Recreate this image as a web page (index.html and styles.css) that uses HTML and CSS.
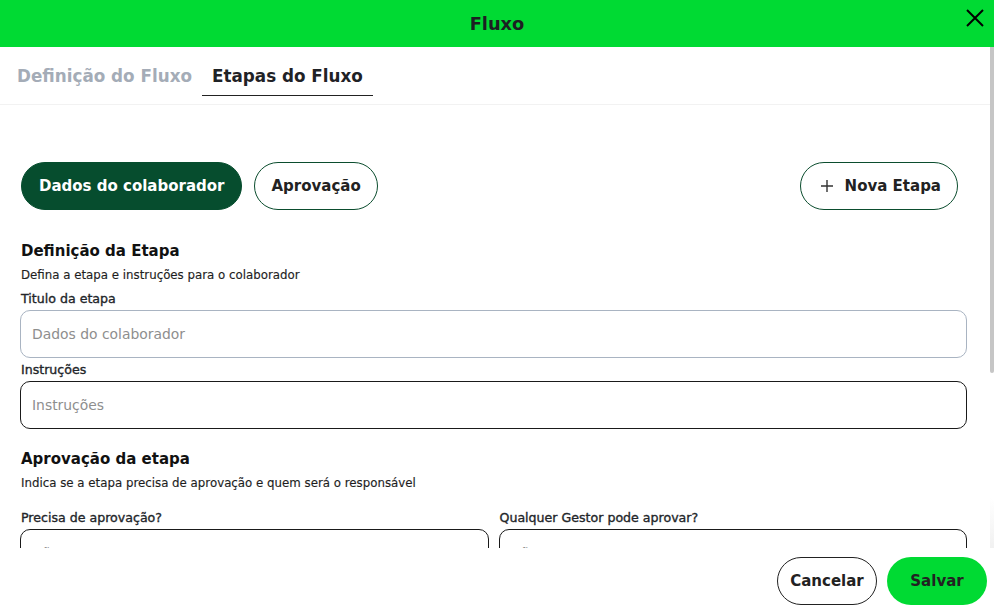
FILE: index.html
```html
<!DOCTYPE html>
<html lang="pt-BR">
<head>
<meta charset="utf-8">
<title>Fluxo</title>
<link rel="stylesheet" href="styles.css">
</head>
<body>
<div class="modal">
  <header class="topbar">
    <h1 class="topbar-title">Fluxo</h1>
    <button class="close-btn" aria-label="Fechar">
      <svg width="20" height="20" viewBox="0 0 20 20"><path d="M2 2 L18 18 M18 2 L2 18" stroke="#000" stroke-width="2" fill="none"/></svg>
    </button>
  </header>
  <div class="body-row">
    <div class="scroll">
      <nav class="tabs">
        <button class="tab">Definição do Fluxo</button>
        <button class="tab tab-active">Etapas do Fluxo</button>
      </nav>
      <section class="content">
        <div class="stages">
          <button class="pill pill-active">Dados do colaborador</button>
          <button class="pill">Aprovação</button>
          <div class="spacer"></div>
          <button class="pill pill-new">
            <svg width="12" height="12" viewBox="0 0 12 12"><path d="M6 0 V12 M0 6 H12" stroke="#333" stroke-width="1.4" fill="none"/></svg>
            <span>Nova Etapa</span>
          </button>
        </div>

        <h2 class="section-title">Definição da Etapa</h2>
        <p class="section-desc">Defina a etapa e instruções para o colaborador</p>
        <label class="field-label">Titulo da etapa</label>
        <div class="input input-soft">Dados do colaborador</div>
        <label class="field-label">Instruções</label>
        <div class="input">Instruções</div>

        <h2 class="section-title section-gap">Aprovação da etapa</h2>
        <p class="section-desc">Indica se a etapa precisa de aprovação e quem será o responsável</p>
        <div class="grid2">
          <div class="field">
            <label class="field-label">Precisa de aprovação?</label>
            <div class="input">Não</div>
          </div>
          <div class="field">
            <label class="field-label">Qualquer Gestor pode aprovar?</label>
            <div class="input">Não</div>
          </div>
        </div>
      </section>
    </div>
    <div class="rail"><div class="thumb"></div></div>
  </div>
  <footer class="footer">
    <button class="btn btn-outline">Cancelar</button>
    <button class="btn btn-primary">Salvar</button>
  </footer>
</div>
</body>
</html>
```
FILE: styles.css
```css
* { box-sizing: border-box; }
html, body { margin: 0; padding: 0; height: 100%; }
body {
  font-family: "DejaVu Sans", "Liberation Sans", sans-serif;
  color: #1f2226;
  background: #fff;
}
button { font-family: inherit; cursor: pointer; }

.modal {
  display: flex;
  flex-direction: column;
  height: 100vh;
}

.topbar {
  position: relative;
  height: 47px;
  flex: none;
  background: #00da33;
  display: flex;
  align-items: center;
  justify-content: center;
}
.topbar-title {
  margin: 0;
  font-size: 17.8px;
  font-weight: 700;
  color: #1c1f22;
  line-height: 24px;
  padding-top: 1px;
}
.close-btn {
  position: absolute;
  right: 9px;
  top: 8px;
  width: 20px;
  height: 20px;
  padding: 0;
  border: 0;
  background: transparent;
  display: flex;
}

.body-row {
  flex: 1;
  min-height: 0;
  display: flex;
  overflow: hidden;
}
.scroll {
  flex: 1;
  min-width: 0;
  overflow: hidden;
}
.rail {
  width: 4px;
  flex: none;
  background: linear-gradient(#fff 90%, #f1f1f1);
}
.thumb {
  height: 326px;
  background: #c6c6c6;
  border-radius: 0 0 2px 2px;
}

.tabs {
  display: flex;
  padding: 0 7px 8px;
  border-bottom: 1px solid #f2f2f2;
}
.tab {
  border: 0;
  background: transparent;
  padding: 17px 10px 7px;
  line-height: 24px;
  font-size: 16.8px;
  font-weight: 700;
  color: #a4acb7;
  border-bottom: 1px solid transparent;
}
.tab-active {
  color: #1f2226;
  border-bottom-color: #222;
}

.content {
  padding: 57px 23px 240px 20px;
}

.stages {
  display: flex;
  gap: 12px;
  padding: 0 9px 0 1px;
}
.spacer { flex: 1; }
.pill {
  height: 48px;
  border-radius: 24px;
  padding: 0 16px 0 17px;
  font-size: 15px;
  font-weight: 700;
  background: #fff;
  color: #222;
  border: 1px solid #0b4d2e;
  display: flex;
  align-items: center;
}
.pill-active {
  background: #064d2e;
  color: #fff;
  border-color: #064d2e;
}
.pill-new {
  padding-left: 20px;
  gap: 12px;
}

.section-title {
  margin: 29px 0 0 1px;
  font-size: 15px;
  font-weight: 700;
  line-height: 24px;
  color: #111;
}
.section-gap { margin-top: 18px; }
.section-desc {
  margin: 4px 0 0 1px;
  font-size: 11.8px;
  line-height: 16px;
  color: #1e1e1e;
  -webkit-text-stroke: 0.15px #1e1e1e;
}
.field-label {
  display: block;
  margin: 8px 0 0 1px;
  font-size: 12.6px;
  font-weight: 400;
  line-height: 16px;
  color: #23262a;
  -webkit-text-stroke: 0.35px #23262a;
}
.input {
  margin-top: 3px;
  height: 48px;
  border: 1px solid #1a1a1a;
  border-radius: 10px;
  padding: 0 11px;
  display: flex;
  align-items: center;
  font-size: 13.9px;
  color: #8e8e8e;
}
.input-soft { border-color: #a9b4c2; }
.input-soft + .field-label { margin-top: 4px; }

.grid2 {
  display: grid;
  grid-template-columns: 1fr 1fr;
  gap: 10px;
  margin-top: 19px;
}
.grid2 .field-label { margin-top: 0; }

.footer {
  flex: none;
  height: 59px;
  display: flex;
  justify-content: flex-end;
  gap: 10px;
  padding: 9px 7px 0;
  background: #fff;
}
.btn {
  width: 100px;
  height: 48px;
  border-radius: 24px;
  font-size: 15px;
  font-weight: 700;
  color: #222;
}
.btn-outline { background: #fff; border: 1px solid #222; }
.btn-primary { background: #00da33; border: 0; }
```
